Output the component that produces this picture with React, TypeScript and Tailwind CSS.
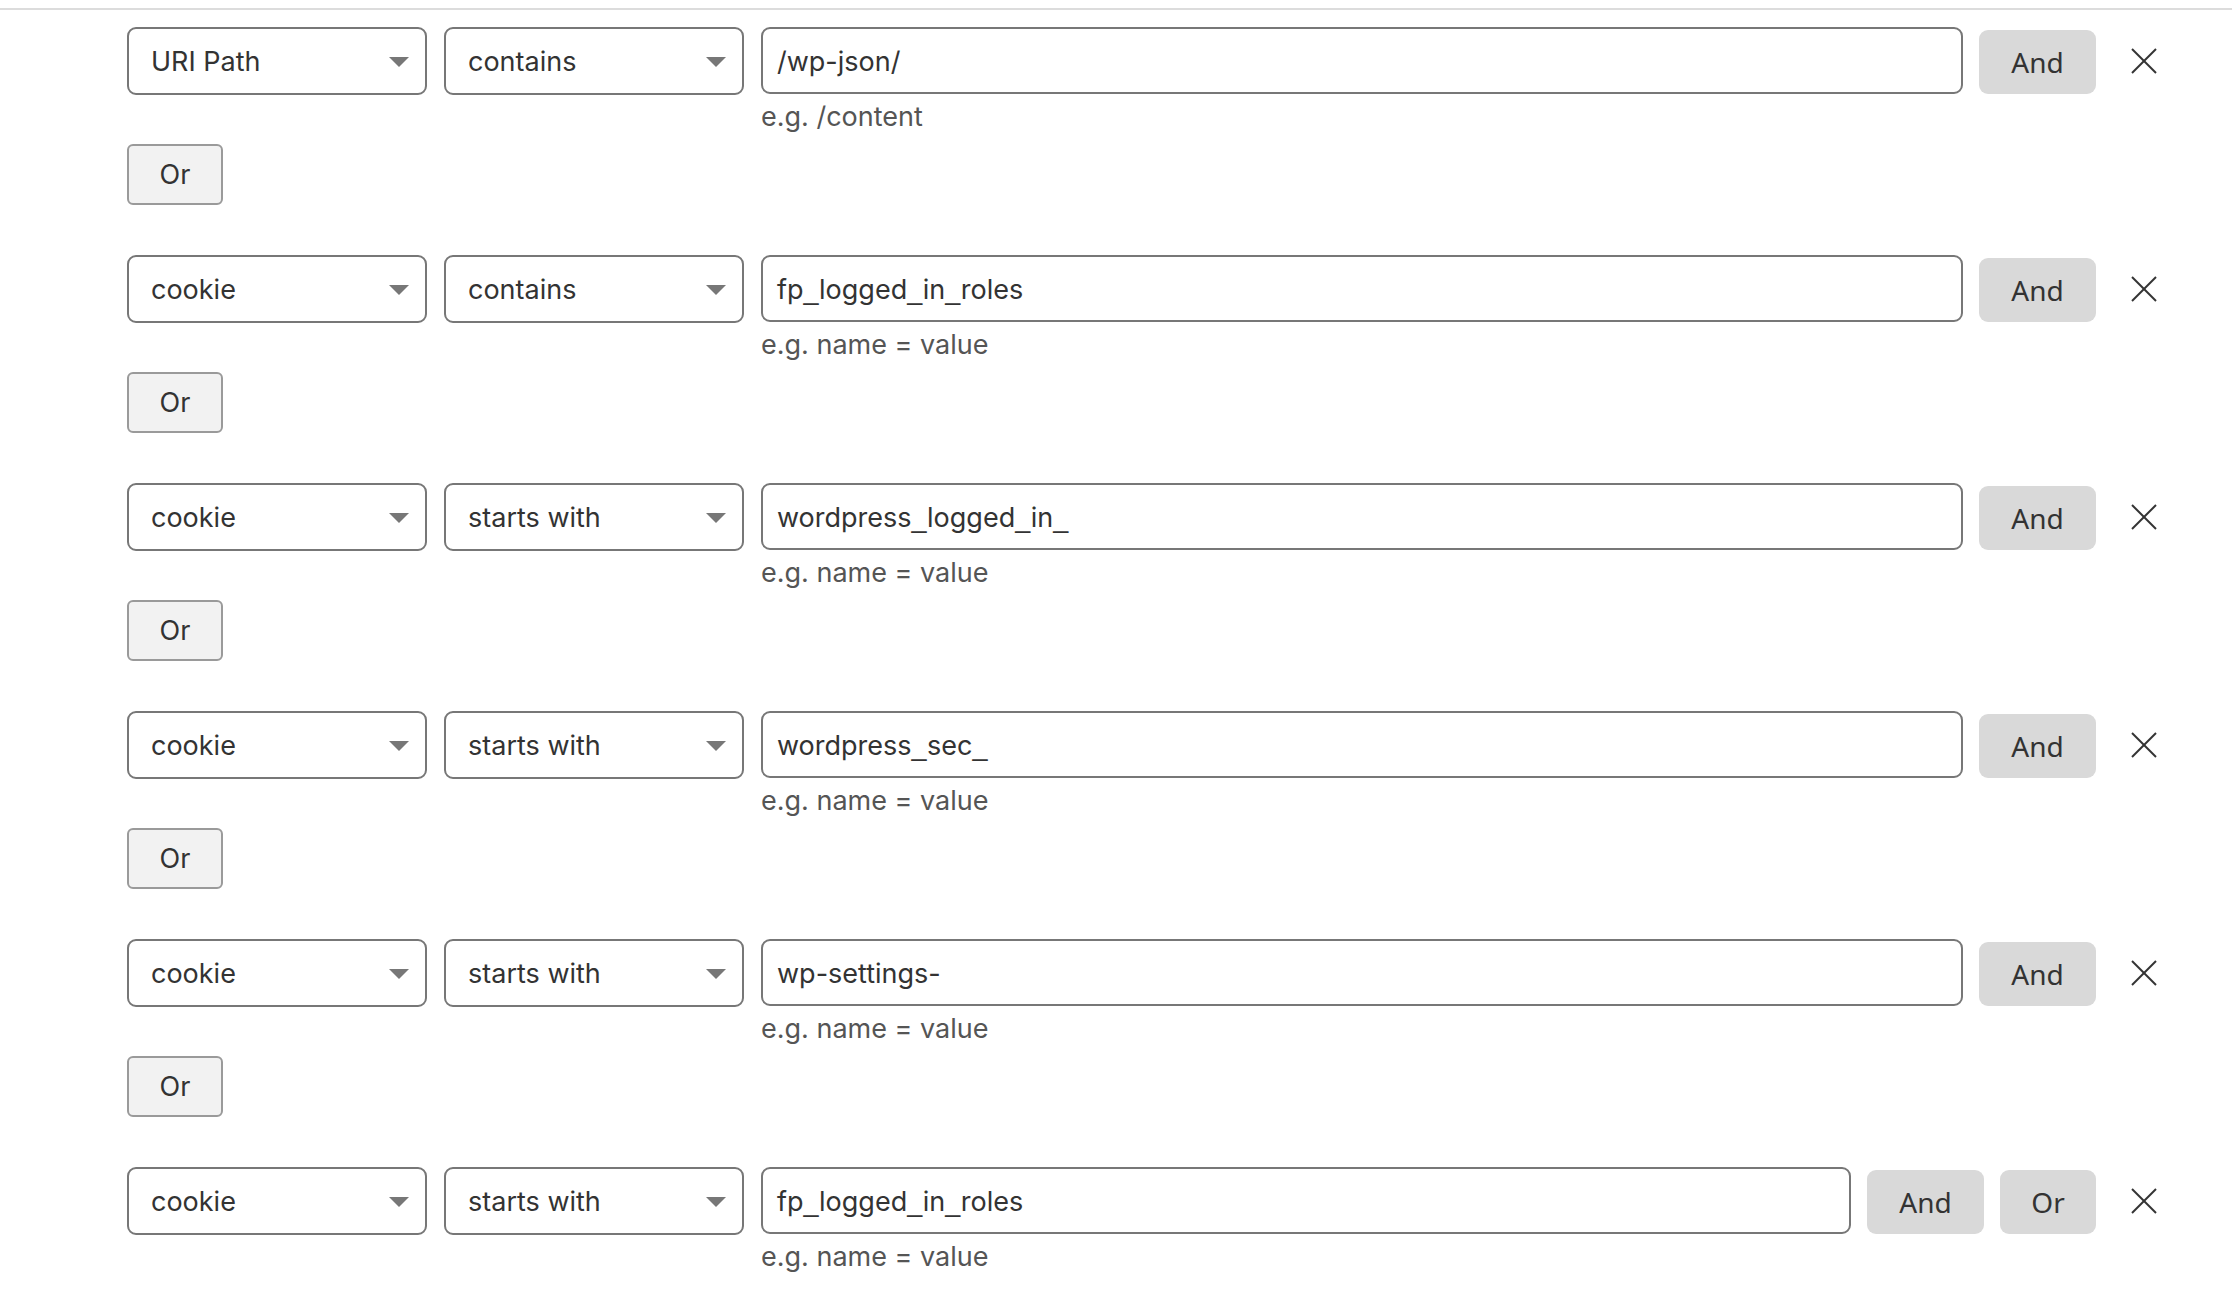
import React from "react";

type Rule = { field: string; op: string; value: string; hint: string; last?: boolean };

const rules: Rule[] = [
  { field: "URI Path", op: "contains", value: "/wp-json/", hint: "e.g. /content" },
  { field: "cookie", op: "contains", value: "fp_logged_in_roles", hint: "e.g. name = value" },
  { field: "cookie", op: "starts with", value: "wordpress_logged_in_", hint: "e.g. name = value" },
  { field: "cookie", op: "starts with", value: "wordpress_sec_", hint: "e.g. name = value" },
  { field: "cookie", op: "starts with", value: "wp-settings-", hint: "e.g. name = value" },
  { field: "cookie", op: "starts with", value: "fp_logged_in_roles", hint: "e.g. name = value", last: true },
];

const sans = "font-['Inter',_'Liberation_Sans',_sans-serif]";
const noto = "font-['Noto_Sans',_'Open_Sans',_sans-serif]";

function ValueText({ text }: { text: string }) {
  const parts = text.split("_");
  return (
    <span className={`${sans} text-[27px] leading-none text-[#333333]`}>
      {parts.map((p, i) => (
        <React.Fragment key={i}>
          {p}
          {i < parts.length - 1 && (
            <span className="font-['Liberation_Sans',_sans-serif] tracking-[0.5px]">_</span>
          )}
        </React.Fragment>
      ))}
    </span>
  );
}

function Select({ label }: { label: string }) {
  return (
    <div className="relative flex h-[68px] w-[300px] shrink-0 items-center rounded-[9px] border-2 border-[#777777] bg-white pl-[22px] pr-[16px]">
      <span className={`${sans} text-[27px] leading-none text-[#333333]`}>{label}</span>
      <svg className="absolute right-[16px] top-[28px]" width="20" height="10" viewBox="0 0 20 10">
        <polygon points="0,0 20,0 10,10" fill="#777777" />
      </svg>
    </div>
  );
}

function GrayButton({ label, w }: { label: string; w: string }) {
  return (
    <button
      className={`${noto} ${w} mt-[3px] flex h-[64px] shrink-0 items-center justify-center rounded-[9px] bg-[#d9d9d9] text-[28px] leading-none text-[#333333]`}
    >
      {label}
    </button>
  );
}

function CloseIcon() {
  return (
    <div className="flex h-[68px] w-[48px] shrink-0 items-center justify-center">
      <svg width="26" height="26" viewBox="0 0 26 26">
        <line x1="1" y1="1" x2="25" y2="25" stroke="#333333" strokeWidth="2" />
        <line x1="25" y1="1" x2="1" y2="25" stroke="#333333" strokeWidth="2" />
      </svg>
    </div>
  );
}

function RuleRow({ rule }: { rule: Rule }) {
  return (
    <div className="flex items-start">
      <div className="flex flex-1 items-start gap-[17px]">
        <Select label={rule.field} />
        <Select label={rule.op} />
        <div className="flex flex-1 flex-col">
          <div className="flex h-[67px] items-center rounded-[9px] border-2 border-[#777777] bg-white pl-[14px] pt-[2px]">
            <ValueText text={rule.value} />
          </div>
          <div className={`${sans} mt-[4px] text-[27px] leading-[38px] text-[#555555]`}>{rule.hint}</div>
        </div>
      </div>
      <div className="ml-[16px] flex items-start gap-[16px]">
        <GrayButton label="And" w="w-[117px]" />
        {rule.last && <GrayButton label="Or" w="w-[96px]" />}
      </div>
      <div className="ml-[24px]">
        <CloseIcon />
      </div>
    </div>
  );
}

export default function App() {
  return (
    <div className="min-h-[1298px] w-full bg-white pt-[8px]">
      <div className="border-t-2 border-[#dcdcdc] pl-[127px] pr-[64px] pt-[17px]">
        {rules.map((r, i) => (
          <div key={i} className={r.last ? "" : "mb-[50px]"}>
            <RuleRow rule={r} />
            {!r.last && (
              <button
                className={`${sans} mt-[8px] flex h-[61px] w-[96px] items-center justify-center rounded-[6px] border-2 border-[#9a9a9a] bg-[#f2f2f2] text-[27px] leading-none text-[#333333]`}
              >
                Or
              </button>
            )}
          </div>
        ))}
      </div>
    </div>
  );
}
